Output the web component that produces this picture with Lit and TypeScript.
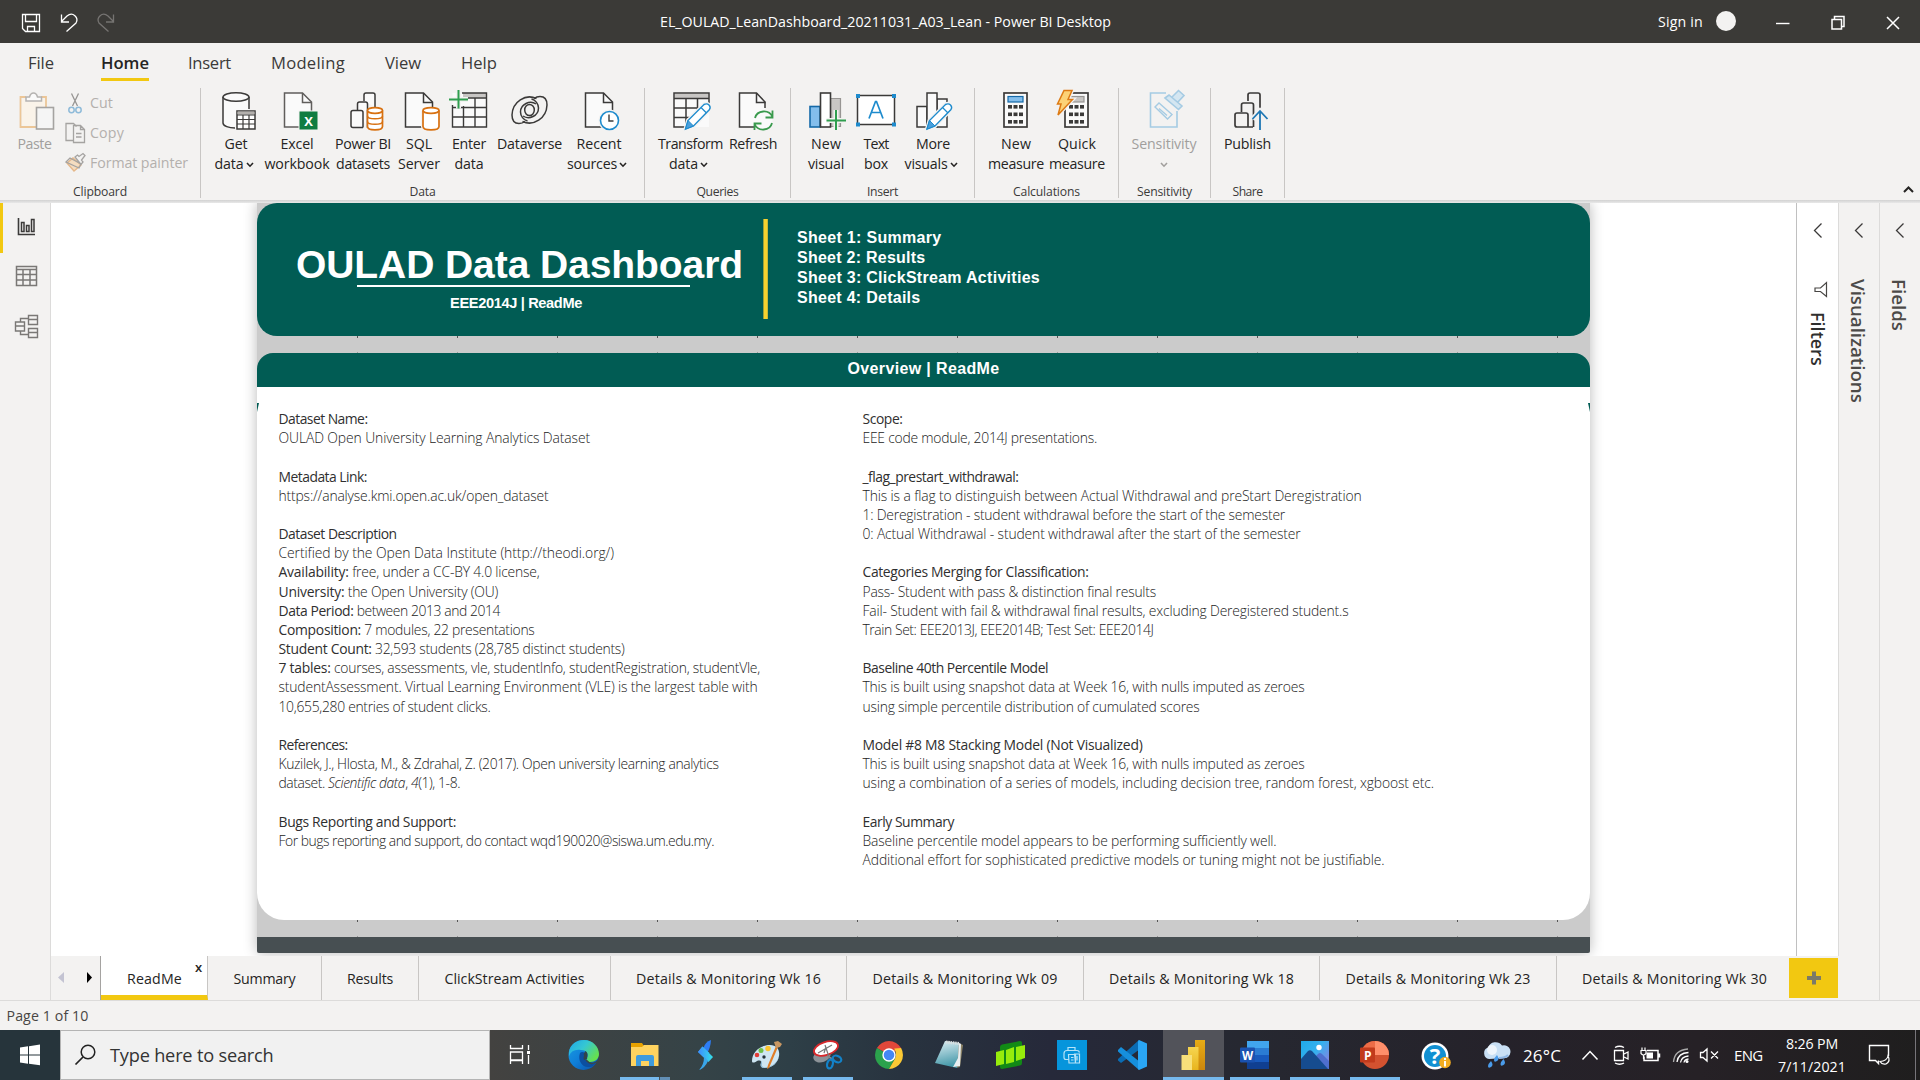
import { LitElement, html, svg, css } from "lit";
import { customElement, property } from "lit/decorators.js";
import { classMap } from "lit/directives/class-map.js";

/** Text whose tracking is adjusted so that it takes a given width. */
@customElement("fit-text")
class FitText extends LitElement {
  @property({ type: Number }) w = 0;
  static styles = css`
    :host { display: inline-block; white-space: nowrap; }
    .t { display: inline-block; white-space: nowrap; }
  `;
  firstUpdated() {
    const t = this.renderRoot.querySelector(".t") as HTMLElement;
    const n = (this.textContent || "").trim().length;
    if (!n || !this.w) return;
    const r = t.getBoundingClientRect();
    const diff = this.w - Math.max(r.width, this.hasAttribute("upright") ? 0 : r.width);
    t.style.letterSpacing = `${diff / n}px`;
  }
  render() {
    return html`<span class="t"><slot></slot></span>`;
  }
}

/** Icons are drawn in window coordinates; x, y, w, h is the box they occupy. */
const box = (x: number, y: number, w: number, h: number, body: unknown) =>
  html`<svg width=${w} height=${h} viewBox="${x} ${y} ${w} ${h}" fill="none">${body}</svg>`;

const G = "#3b3a39";
const doc = (x: number, s = G) => svg`
  <path d="M${x} 93h18l9 9v25h-27z" fill="#fafafa" stroke=${s} stroke-width="1.5"/>
  <path d="M${x + 18} 93v9.500h9" stroke=${s} stroke-width="1.5"/>`;

const pencil = (x: number) => svg`
  <path d="M${x} 129l2.500-8.500 16-16q3-1.500 5 .5t.5 4.500l-16 16.500z" fill="#fff" stroke="#f3f2f1" stroke-width="4"/>
  <path d="M${x} 129l2.500-8.500 16-16q3-1.500 5 .5t.5 4.500l-16 16.500z" fill="#fff" stroke="#1e8bcd" stroke-width="1.4"/>
  <path d="M${x} 129l2.500-8.500 5.500 5.500z" fill="#4a9fdc" stroke="#1e8bcd"/>
  <path d="M${x + 15.5} 107.500l5.500 5.500" stroke="#1e8bcd" stroke-width="1.2"/>`;

const calc = (x: number, top: string, topStroke: string) => svg`
  <rect x=${x} y="93" width="23" height="34" fill="#fafafa" stroke=${G} stroke-width="1.700"/>
  <rect x=${x + 4} y="96.500" width="15" height="5.500" fill=${top} stroke=${topStroke} stroke-width="1.200"/>
  ${[105, 112.5, 120].map((y) => [4, 9.5, 15].map((dx) => svg`<rect x=${x + dx} y=${y} width="4" height="3.600" fill=${G}/>`))}`;

const chev = (c = "#252423") => html`<svg class="chev" width="8" height="6" viewBox="0 0 8 6" fill="none"><path d="M1 1l3 3.200 3-3.200" stroke=${c} stroke-width="1.600"/></svg>`;

interface Btn { c: number; icon: unknown; lines: [string, number, boolean?][]; off?: boolean }
interface Group { name: string; w: number; cls: string; items: Btn[] }

const groups: Group[] = [
  {
    name: "Data", w: 26, cls: "data", items: [
      { c: 236, lines: [["Get", 23], ["data", 29, true]], icon: svg`
        <path d="M223 97v26c0 3 6 5 13 5v-18h13v-13z" fill="#fafafa"/>
        <path d="M223 97v26c0 3 6 5 12 5M249 97v12" stroke=${G} stroke-width="1.500"/>
        <ellipse cx="236" cy="97" rx="13" ry="4.300" fill="#fafafa" stroke=${G} stroke-width="1.500"/>
        <rect x="237" y="111" width="18" height="18" fill="#fff" stroke=${G} stroke-width="1.500"/>
        <rect x="237.500" y="111.500" width="17" height="3" fill="#b3b0ad"/>
        <path d="M237 115h18M237 119.500h18M237 124h18M243 115v14M249 115v14" stroke=${G} stroke-width="1.200"/>` },
      { c: 297, lines: [["Excel", 33], ["workbook", 65]], icon: svg`${doc(284.5, "#605e5c")}
        <rect x="299" y="111" width="19" height="19" fill="#107c41" stroke="#f3f2f1"/>
        <text x="308.500" y="125.500" text-anchor="middle" font-family="Open Sans" font-weight="700" font-size="13" fill="#fff">X</text>` },
      { c: 363, lines: [["Power BI", 56], ["datasets", 54]], icon: svg`
        <path d="M364 101v-6q0-2 2-2h7q2 0 2 2v12M357.500 110v-6q0-2 2-2h6q2 0 2 2v24M363 127.500h-10q-2 0-2-2v-13q0-2 2-2h8q2 0 2 2v15" fill="#fafafa" stroke=${G} stroke-width="1.500"/>
        <path d="M367.500 110.500v16c0 4.500 15 4.500 15 0v-16" fill="#fff" stroke="#d87111" stroke-width="1.700"/>
        <ellipse cx="375" cy="110.500" rx="7.500" ry="2.800" fill="#fff" stroke="#d87111" stroke-width="1.700"/>
        <path d="M367.500 116c0 3.800 15 3.800 15 0M367.500 121.500c0 3.800 15 3.800 15 0" stroke="#d87111" stroke-width="1.500"/>` },
      { c: 419, lines: [["SQL", 26], ["Server", 42]], icon: svg`${doc(405.5)}
        <path d="M423 110.500v16c0 4.500 16 4.500 16 0v-16" fill="#fff" stroke="#f3f2f1" stroke-width="4"/>
        <path d="M423 110.500v16c0 4.500 16 4.500 16 0v-16" fill="#fff" stroke="#d87111" stroke-width="1.700"/>
        <ellipse cx="431" cy="110.500" rx="8" ry="2.800" fill="#fff" stroke="#d87111" stroke-width="1.700"/>` },
      { c: 469, lines: [["Enter", 34], ["data", 29]], icon: svg`
        <rect x="452.500" y="93" width="34" height="34" fill="#fafafa"/>
        <path d="M463 93h23.500v4.500H463z" fill="#c8c6c4"/>
        <path d="M462 93h24.500v34h-34v-22M464 98h22.500M464 107.500h22M453 107.500h11M453 117h33M463.500 106v21M475 98v29" stroke=${G} stroke-width="1.400"/>
        <path d="M458.500 90v18.500M449 99.500h19" stroke="#f3f2f1" stroke-width="5"/>
        <path d="M458.500 90v18.500M449 99.500h19" stroke="#2f9e4f" stroke-width="2"/>` },
      { c: 529.5, lines: [["Dataverse", 65]], icon: svg`
        <g stroke=${G} stroke-width="1.500">
        <path d="M536 98.500c-11-5-24 3-24.500 16.500 0 6 3 8.500 7 8.500 2 0 4-.5 6-2"/>
        <path d="M522 121.500c11 5 24-3 24.500-16.500 0-6-3-8.500-7-8.500-2 0-4 .5-6 2"/>
        <path d="M535.500 104c-6-4-15.500 0-15.500 8 0 4 3 8 7 9"/>
        <path d="M522.500 116c6 4 15.500 0 15.500-8 0-4-3-8-7-9"/>
        <ellipse cx="529" cy="110" rx="4.800" ry="5.500"/></g>` },
      { c: 599, lines: [["Recent", 45], ["sources", 50, true]], icon: svg`${doc(585.5)}
        <circle cx="609.500" cy="120.500" r="9" fill="#fff" stroke="#f3f2f1" stroke-width="4"/>
        <circle cx="609.500" cy="120.500" r="9" fill="#fff" stroke="#1e8bcd" stroke-width="1.600"/>
        <path d="M609 114.500v6.500h4.500" stroke=${G} stroke-width="1.400"/>` },
    ],
  },
  {
    name: "Queries", w: 42, cls: "queries", items: [
      { c: 690.5, lines: [["Transform", 65], ["data", 29, true]], icon: svg`
        <rect x="673.500" y="93" width="35" height="34" fill="#fafafa"/>
        <rect x="674" y="93.500" width="34" height="4.500" fill="#c8c6c4"/>
        <path d="M685 127h-11.500v-34h35v14M674 98.500h34M674 108h30M674 117.500h18M685.500 98.500v28M697 98.500v14" stroke=${G} stroke-width="1.500"/>${pencil(685)}` },
      { c: 753, lines: [["Refresh", 48]], icon: svg`
        <path d="M755 127h-15.500v-34h17l8.500 9v7" fill="#fafafa"/><path d="M754 127h-14.500v-34h17l8.500 9v6" stroke=${G} stroke-width="1.500"/><path d="M756.500 93v9.500h9" stroke=${G} stroke-width="1.500"/>
        <circle cx="763.500" cy="120.500" r="9" fill="#fafafa"/>
        <path d="M755 118c2-8 14-9 17.500-1M772.500 110.500v7h-7M772 123c-2 8-14 9-17.500 1M754.500 130v-6.500h7" stroke="#3a9a4d" stroke-width="1.800"/>` },
    ],
  },
  {
    name: "Insert", w: 31, cls: "insert", items: [
      { c: 826, lines: [["New", 30], ["visual", 36]], icon: svg`
        <path d="M830.500 98.500h10v28h-10z" fill="#c8c6c4" stroke="#979593" stroke-width="1.200"/>
        <rect x="810" y="106.500" width="10" height="20.500" fill="#83beec" stroke="#1469a8" stroke-width="1.600"/>
        <rect x="820.500" y="93" width="10" height="34" fill="#fff" stroke=${G} stroke-width="1.600"/>
        <path d="M836 110v20M826.500 120.500h19.500" stroke="#f3f2f1" stroke-width="5"/>
        <path d="M836 110v20M826.500 120.500h19.500" stroke="#2f9e4f" stroke-width="2"/>` },
      { c: 876, lines: [["Text", 25], ["box", 24]], icon: svg`
        <rect x="857.500" y="95.500" width="37" height="29" fill="#fff" stroke=${G} stroke-width="1.500"/>
        <path d="M856 94h4v4h-4zM892 94h4v4h-4zM856 122.500h4v4h-4zM892 122.500h4v4h-4z" fill="#1e8bcd"/>
        <path d="M869 118.500l6.500-17h1l6.500 17M871.500 112.500h9.500" stroke="#1e8bcd" stroke-width="1.700"/>` },
      { c: 933, lines: [["More", 34], ["visuals", 43, true]], icon: svg`
        <path d="M937 99h10v28h-10z" fill="#fafafa" stroke=${G} stroke-width="1.500"/>
        <rect x="917" y="106.500" width="10" height="20.500" fill="#fafafa" stroke=${G} stroke-width="1.500"/>
        <rect x="927" y="93" width="10" height="34" fill="#fafafa" stroke=${G} stroke-width="1.500"/>${pencil(927)}` },
    ],
  },
  {
    name: "Calculations", w: 67, cls: "calcs", items: [
      { c: 1016, lines: [["New", 30], ["measure", 56]], icon: calc(1004, "#83beec", "#1469a8") },
      { c: 1077, lines: [["Quick", 38], ["measure", 56]], icon: svg`${calc(1065, "#c8c6c4", "#979593")}
        <path d="M1064 90.500h8l-4 9h4.500l-14.500 15.500 3-11h-3.500z" fill="#fcd277" stroke="#f3f2f1" stroke-width="4"/>
        <path d="M1064 90.500h8l-4 9h4.500l-14.500 15.500 3-11h-3.500z" fill="#fcd277" stroke="#dd7a14" stroke-width="1.500"/>` },
    ],
  },
  {
    name: "Sensitivity", w: 55, cls: "sens", items: [
      { c: 1164, off: true, lines: [["Sensitivity", 65], ["", 0, true]], icon: svg`
        <path d="M1166 93h-15.500v34h26.500v-16" stroke="#a5cbe3" stroke-width="1.600"/>
        <path d="M1155 107l4-4 13 11.500-4.500 4.500zM1159 108.500l8 7" stroke="#a5cbe3" stroke-width="1.400"/>
        <path d="M1165 98l4-3 13 11-3.500 3.500zM1172 97l6.500-6.500 5.500 5-6.500 7" fill="#d4e6f1" stroke="#a5cbe3" stroke-width="1.600"/>` },
    ],
  },
  {
    name: "Share", w: 30, cls: "share", items: [
      { c: 1247, lines: [["Publish", 47]], icon: svg`
        <path d="M1247 101v-6q0-2 2-2h8q2 0 2 2v18M1240.500 112v-7q0-2 2-2h8q2 0 2 2v22M1252 127h-16q-2 0-2-2v-10q0-2 2-2h9q2 0 2 2v12" stroke=${G} stroke-width="1.700"/>
        <path d="M1259 130v-18M1251.500 119l7.500-8 7.500 8" stroke="#f3f2f1" stroke-width="5"/>
        <path d="M1259 130v-18.500M1251.500 119l7.500-8 7.500 8" stroke="#1e77b4" stroke-width="1.800"/>` },
    ],
  },
];

type Line = [w: number, bold: string, light?: string, em?: string, tail?: string] | null;

const leftText: Line[] = [
  [89, "Dataset Name:"],
  [311.5, "", "OULAD Open University Learning Analytics Dataset"],
  null,
  [88.5, "Metadata Link:"],
  [270, "", "https://analyse.kmi.open.ac.uk/open_dataset"],
  null,
  [118, "Dataset Description"],
  [335.5, "", "Certified by the Open Data Institute (http://theodi.org/)"],
  [261, "Availability:", " free, under a CC-BY 4.0 license,"],
  [219.5, "University:", " the Open University (OU)"],
  [221.5, "Data Period:", " between 2013 and 2014"],
  [256, "Composition:", " 7 modules, 22 presentations"],
  [346, "Student Count:", " 32,593 students (28,785 distinct students)"],
  [481.5, "7 tables:", " courses, assessments, vle, studentInfo, studentRegistration, studentVle,"],
  [479, "", "studentAssessment. Virtual Learning Environment (VLE) is the largest table with"],
  [212, "", "10,655,280 entries of student clicks."],
  null,
  [69, "References:"],
  [440, "", "Kuzilek, J., Hlosta, M., & Zdrahal, Z. (2017). Open university learning analytics"],
  [181.5, "", "dataset. ", "Scientific data", ", "],
  null,
  [177.5, "Bugs Reporting and Support:"],
  [435.5, "", "For bugs reporting and support, do contact wqd190020@siswa.um.edu.my."],
];

const rightText: Line[] = [
  [40, "Scope:"],
  [234.5, "", "EEE code module, 2014J presentations."],
  null,
  [156, "_flag_prestart_withdrawal:"],
  [499, "", "This is a flag to distinguish between Actual Withdrawal and preStart Deregistration"],
  [422.5, "", "1: Deregistration - student withdrawal before the start of the semester"],
  [438, "", "0: Actual Withdrawal - student withdrawal after the start of the semester"],
  null,
  [226, "Categories Merging for Classification:"],
  [293.5, "", "Pass- Student with pass & distinction final results"],
  [486, "", "Fail- Student with fail & withdrawal final results, excluding Deregistered student.s"],
  [291, "", "Train Set: EEE2013J, EEE2014B; Test Set: EEE2014J"],
  null,
  [185.5, "Baseline 40th Percentile Model"],
  [442, "", "This is built using snapshot data at Week 16, with nulls imputed as zeroes"],
  [337, "", "using simple percentile distribution of cumulated scores"],
  null,
  [280, "Model #8 M8 Stacking Model (Not Visualized)"],
  [442, "", "This is built using snapshot data at Week 16, with nulls imputed as zeroes"],
  [571.5, "", "using a combination of a series of models, including decision tree, random forest, xgboost etc."],
  null,
  [91.5, "Early Summary"],
  [414, "", "Baseline percentile model appears to be performing sufficiently well."],
  [522, "", "Additional effort for sophisticated predictive models or tuning might not be justifiable."],
];

const pages: [string, number, string][] = [
  ["Summary", 62, "p1"], ["Results", 46, "p2"], ["ClickStream Activities", 140, "p3"],
  ["Details & Monitoring Wk 16", 185, "p4"], ["Details & Monitoring Wk 09", 185, "p5"],
  ["Details & Monitoring Wk 18", 185, "p4"], ["Details & Monitoring Wk 23", 185, "p5"],
  ["Details & Monitoring Wk 30", 185, "p6"],
];

interface App { run?: "full" | "mid" | "split"; active?: boolean; narrow?: boolean; icon: unknown }
const apps: App[] = [
  { icon: svg`<circle cx="15.500" cy="16" r="15" fill="url(#edgeB)"/>
      <path d="M1 13C2 5 9 1 16 1c9 0 15 7 15 14 0 5-4 8-9 8-3 0-4-2-3-4 2-3 0-8-6-8C7 10 3 12 1 17z" fill="url(#edgeT)"/>
      <path d="M12 14c-3 8 3 15 9 14 3 0 6-2 7-4-5 2-9 0-10-3-1-2 1-3 0-5-1-3-4-4-6-2z" fill="#0c4fa0"/>
      <path d="M16.500 13.500c3 2 0 4 1 7" stroke="#32444a" stroke-width="3.500"/>
      <path d="M18 21c4 5 9 4 13 0" stroke="#38454a" stroke-width="1.500"/>
      <defs><linearGradient id="edgeB" x1="0" y1="0" x2="1" y2="1"><stop offset="0" stop-color="#1b9de2"/><stop offset=".5" stop-color="#0f7ed8"/><stop offset="1" stop-color="#0b4da2"/></linearGradient>
      <linearGradient id="edgeT" x1="0" y1="0" x2="1" y2=".6"><stop offset="0" stop-color="#1fa7e8"/><stop offset=".5" stop-color="#35c7d3"/><stop offset="1" stop-color="#66e04e"/></linearGradient></defs>` },
  { run: "split", icon: svg`<path d="M2 4h11l2 3h14v20H2z" fill="#e8a200"/><path d="M2 8h11l2-2h14.500v21H2z" fill="#ffd35f"/><path d="M7 27V18q0-2 2-2h14q2 0 2 2v9h-5v-5h-8v5z" fill="#3f9bdd"/>` },
  { icon: svg`<path d="M21 1q-6 2-7.500 8l4 4.500q3-5 3.500-12.500z" fill="#2d7df5"/><path d="M12.500 7.500L8 13l6.500 6 5-5z" fill="#35a6f7"/><path d="M8 13l4.500-5.500L23 18l-4.500 5z" fill="url(#sh)"/><path d="M14 18q0 8-5 13 6-2 9-9z" fill="#3aa5e8"/>
      <defs><linearGradient id="sh"><stop offset="0" stop-color="#3d8bff"/><stop offset="1" stop-color="#35e0e8"/></linearGradient></defs>` },
  { run: "full", icon: svg`<path d="M1 22c0-9 8-16 18-16 7 0 10 5 9 11-1 7-7 12-14 12-4 0-5-2-4-5 1-2-1-3-4-2-3 2-5 2-5 0z" fill="#cfe6f3"/><path d="M3 23c5-3 9-1 8 2s2 4 5 3c6-1 10-5 12-10-2 6-7 11-14 11-4 0-5-2-4-5s-3-3-7-1z" fill="#8fbcd8"/><circle cx="6" cy="16" r="2.300" fill="#e23c36"/><circle cx="10" cy="11.500" r="2.500" fill="#6fc04a"/><circle cx="17" cy="9.500" r="2.700" fill="#fcc32c"/><circle cx="13" cy="18" r="1.700" fill="#26333b"/><path d="M25 7l2 1-9 21-2 1 1-4z" fill="#e07c26"/><path d="M23 3l4-1 4 3-2 3-4 1z" fill="#c99763"/>` },
  { run: "full", icon: svg`<ellipse cx="10" cy="17" rx="9" ry="6" fill="#8c9298" transform="rotate(-20 10 17)"/><ellipse cx="14" cy="9.500" rx="12.500" ry="6.500" fill="#fff" stroke="#d8292c" stroke-width="1.800" transform="rotate(-18 14 9.500)"/><path d="M6 14L20 6M13 6l4 12M14 8l-2 6" stroke="#777" stroke-width="1.200"/><path d="M15 17l7 4" stroke="#888" stroke-width="2"/><ellipse cx="18" cy="25" rx="2.800" ry="4.500" stroke="#1382c9" stroke-width="2.200" transform="rotate(15 18 25)"/><ellipse cx="25" cy="20" rx="4.500" ry="3" stroke="#1382c9" stroke-width="2.200" transform="rotate(25 25 20)"/>` },
  { icon: svg`<path d="M16 16L3.900 9A14 14 0 0 1 28.100 9z" fill="#e0473a"/><path d="M3.900 9A14 14 0 0 0 16 30l6-10.500L16 16z" fill="#2ba24c"/><path d="M28.100 9A14 14 0 0 1 16 30l6.100-10.500Q24 14 21 9z" fill="#fbc934"/><path d="M16 9h12.100L16 10z" fill="#e0473a"/><circle cx="16" cy="16" r="6.700" fill="#fff"/><circle cx="16" cy="16" r="5.300" fill="#4587f3"/>` },
  { icon: svg`<path d="M11 2l14 2 4 2-3 22-4 1z" fill="#8a8165"/><path d="M11 2l14 2-2 25L1 24z" fill="url(#np)"/><path d="M25 4l2 1-1 22-7 1 5-9z" fill="#e9eef0"/><path d="M12 3l13 1.500" stroke="#d9dfe1" stroke-width="3" stroke-dasharray="1.500 .8"/>
      <defs><linearGradient id="np" x1=".3" y1="0" x2=".5" y2="1"><stop offset="0" stop-color="#d6eaf0"/><stop offset="1" stop-color="#3e95a6"/></linearGradient></defs>` },
  { icon: svg`<path d="M5 8q0-2 2-2.500L25 2q2 0 2 2v20q0 2-2 2.500L7 30q-2 0-2-2z" fill="#128a16"/><path d="M1 13l8-2v14l-8 2zM11 11l8-3v15l-8 2zM21 8l9-2v13l-9 3z" fill="#97ec0c"/>` },
  { icon: svg`<rect x="1" y="1" width="30" height="30" fill="#0695dc"/><g stroke="#b5e3f8" stroke-width="1.200"><path d="M12 11.500V8.500h7v3M13 20.500h-3M10 20.500q-2 0-2-2v-4q0-3 3-3h10q2 0 2.500 2M12.500 15.500h7v8.500h-6.500zM15 18.500h2.500M15 21h2.500M18.500 15h5v9h-4zM21 17v4.500"/></g>` },
  { icon: svg`<path d="M22 1l1 9L4 24l-3-2.500v-1.500z" fill="#0a6cb4"/><path d="M1 11l3-3 19 15-1 8L1 12.500z" fill="#168fdc"/><path d="M22 1l8 3.500v23L22 31q-1-.5-1-2V3q0-1.500 1-2z" fill="#2aa6f5"/>` },
  { active: true, run: "full", icon: svg`<rect x="17" y="1" width="10" height="30" fill="url(#pb3)"/><rect x="10" y="8" width="10.500" height="23" fill="url(#pb2)"/><rect x="3.500" y="16" width="10.500" height="15" fill="#f8e07a"/>
      <defs><linearGradient id="pb3" x2="0" y2="1"><stop offset="0" stop-color="#e7ac15"/><stop offset="1" stop-color="#cb860c"/></linearGradient><linearGradient id="pb2" x2="0" y2="1"><stop offset="0" stop-color="#f6d550"/><stop offset="1" stop-color="#e8b41d"/></linearGradient></defs>` },
  { run: "mid", icon: svg`<path d="M8 2h22v7H8z" fill="#41a5ee"/><path d="M8 9h22v7H8z" fill="#2b7cd3"/><path d="M8 16h22v7H8z" fill="#185abd"/><path d="M8 23h22v7H8z" fill="#103f91"/><rect x="1" y="8.500" width="15" height="15" rx="1" fill="#1a52b0"/><text x="8.500" y="20.500" text-anchor="middle" font-family="Open Sans" font-weight="700" font-size="11.500" fill="#fff">W</text>` },
  { run: "mid", narrow: true, icon: svg`<rect x="2" y="2" width="28" height="28" fill="url(#ph)"/><circle cx="20" cy="8.500" r="2.700" fill="#fff"/><path d="M14 20l5-5q2-2 4 0l7 7v8H14z" fill="#4f6fce"/><path d="M2 20l7-8q2-1.500 4 0l16 18H2z" fill="#164c8f"/>
      <defs><linearGradient id="ph" x2="1" y2=".8"><stop offset="0" stop-color="#1fa9ea"/><stop offset=".5" stop-color="#36b1ee"/><stop offset="1" stop-color="#8a7fe0"/></linearGradient></defs>` },
  { run: "mid", narrow: true, icon: svg`<circle cx="16" cy="16" r="14" fill="#d35230"/><path d="M16 2a14 14 0 0 1 14 14H16z" fill="#ff8f6b"/><path d="M16 2a14 14 0 0 0-14 14h14z" fill="#ed6c47"/><rect x="1" y="8.500" width="15" height="15" rx="1" fill="#c23b1c"/><text x="8.700" y="20.500" text-anchor="middle" font-family="Open Sans" font-weight="700" font-size="12" fill="#fff">P</text>` },
  { icon: svg`<circle cx="15" cy="17" r="13.500" fill="#fff"/><circle cx="15" cy="17" r="11" fill="#1190d2"/><text x="15" y="25" text-anchor="middle" font-family="Open Sans" font-weight="700" font-size="22" fill="#fff">?</text><circle cx="25" cy="23.500" r="5.800" fill="#f2ac20"/><path d="M25 22v5.500M25 19v2" stroke="#fff" stroke-width="1.900"/>` },
];

@customElement("app-root")
class AppRoot extends LitElement {
  static styles = css`
    :host { display: flex; flex-direction: column; width: 1920px; height: 1080px; overflow: hidden; background: #f3f2f1; color: #252423; font-family: "Open Sans", "Noto Sans", sans-serif; font-size: 14px; }
    * { box-sizing: border-box; }
    svg { display: block; flex: none; overflow: visible; }
    .titlebar { height: 43px; flex: none; background: #3b3a37; color: #fff; display: flex; align-items: center; }
    .title { flex: none; width: 452px; margin-left: 528px; font-size: 14.2px; }
    .signin { width: 46px; margin-left: 546px; font-size: 14.2px; }
    .tabs { height: 45px; flex: none; display: flex; padding: 0 28px; font-size: 16.6px; color: #3b3a39; }
    .tab { height: 38px; padding-top: 7px; line-height: 25px; margin-right: 40px; border-bottom: 3px solid transparent; }
    .tab.file { margin-right: 47px; }
    .tab.home { color: #252423; font-weight: 600; border-color: #f2c811; margin-right: 39px; }
    .ribbon { height: 112px; flex: none; display: flex; }
    .group { height: 110px; border-right: 1px solid #c8c6c4; display: flex; flex-direction: column; }
    .buttons { height: 97px; display: grid; }
    .gname { height: 13px; line-height: 13px; text-align: center; font-size: 12.2px; color: #3b3a39; }
    .btn { display: flex; flex-direction: column; align-items: center; padding-top: 2px; font-size: 14.2px; line-height: 20px; }
    .btn svg.chev { margin: 2px 0 0 2px; }
    .btn .labels { padding-top: 4px; }
    .lbl { display: flex; justify-content: center; align-items: center; height: 20px; }
    .lbl.drop { margin-left: -4px; }
    .off .lbl.drop { margin-left: -3px; }
    .off { color: #a19f9d; }
    .clip { width: 201px; }
    .clip .buttons { grid-template-columns: 67px 1fr; }
    .clip .btn { padding-left: 2px; }
    .small { display: grid; grid-template-rows: repeat(3, 30px); color: #b3b0ad; font-size: 14.2px; }
    .small div { display: flex; align-items: center; }
    .small svg { margin-right: 1px; }
    .small fit-text { margin-top: -2px; }
    .data { width: 444px; } .data .buttons { grid-template-columns: 60px 62px 70px 42px 58px 63px 76px; padding-left: 5px; }
    .queries { width: 146px; } .queries .buttons { grid-template-columns: 67px 58px; padding-left: 12px; }
    .insert { width: 184px; } .insert .buttons { grid-template-columns: 50px 50px 64px; padding-left: 10px; }
    .calcs { width: 144px; } .calcs .buttons { grid-template-columns: 61px 61px; padding-left: 10.500px; }
    .sens { width: 92px; } .sens .buttons { grid-template-columns: 90px; }
    .share { width: 74px; } .share .buttons { grid-template-columns: 73px; }
    .collapse { margin: 97px 5px 0 auto; }
    .shadow { height: 3px; flex: none; background: linear-gradient(#d2d2d2, #e8e8e8); }
    .work { height: 797px; flex: none; display: flex; }
    .nav { width: 51px; border-right: 1px solid #dcdbda; }
    .nav div { height: 50px; display: flex; border-left: 3px solid transparent; }
    .nav div.on { border-color: #f2c811; }
    .mid { width: 1788px; display: flex; flex-direction: column; }
    .stage { height: 753px; display: flex; background: #fff; overflow: hidden; }
    .canvas { width: 1745px; padding-left: 206px; overflow: hidden; }
    .report { width: 1333px; height: 750px; background: #cbcbcb; box-shadow: 0 0 14px rgba(0,0,0,.28); border-radius: 0 0 2px 2px; }
    .hero { height: 133px; background: #015c54; border-radius: 20px; color: #fff; display: flex; font-family: "Liberation Sans", sans-serif; font-weight: 700; }
    .brand { width: 506px; padding: 40px 0 0 39px; }
    .brand h1 { margin: 0; font-size: 39px; line-height: 44px; height: 42px; }
    .rule { width: 333px; height: 2px; margin-left: 61px; background: #fff; }
    .sub { margin: 7px 0 0 154px; font-size: 14.600px; line-height: 18px; }
    .bar { width: 5px; height: 100px; margin-top: 16px; background: #f7d32e; border-left: 1px solid #9aa03e; border-right: 1px solid #c9b838; }
    .sheets { margin: 25px 0 0 29px; font-size: 16px; line-height: 20px; }
    .sheets div { height: 20px; }
    .gap { height: 17px; background: repeating-linear-gradient(90deg, #555 0 1px, transparent 1px 100px) 100px 0 / 1233px 2px no-repeat, repeating-linear-gradient(90deg, #999 0 1px, transparent 1px 100px) 100px 100% / 1233px 1px no-repeat; }
    .over { height: 34px; background: #015c54; border-radius: 16px 16px 0 0; color: #fff; text-align: center; font: 700 16px/31px "Liberation Sans", sans-serif; }
    .body { position: relative; height: 533px; background: #fff; border-radius: 0 0 27px 27px; display: grid; grid-template-columns: 584px 1fr; padding: 22px 0 0 21.500px; color: #222; font-size: 13.900px; }
    .notch { position: absolute; top: 16px; left: 0; width: 2px; height: 9px; background: #015c54; clip-path: polygon(0 0, 100% 0, 0 100%); }
    .notch.r { left: auto; right: 0; transform: scaleX(-1); }
    .line { height: 19.180px; line-height: 19.180px; display: flex; align-items: center; font-weight: 300; white-space: pre; }
    .line b { font-weight: 400; color: #2f2f2f; }
    .foot { height: 16px; background: #474f52; border-radius: 0 0 2px 2px; }
    .filters { width: 43px; border-left: 1px solid #c0c0c0; border-right: 1px solid #dcdbda; }
    .pane { width: 41px; border-right: 1px solid #dcdbda; }
    .pane:last-child { border-right: 0; width: 40px; }
    .pane, .filters { display: flex; flex-direction: column; align-items: center; color: #3b3a39; }
    .vert { writing-mode: vertical-rl; font-size: 18.700px; line-height: 24px; font-weight: 600; color: #4c4a48; margin-right: 3px; }
    .vert.b { color: #302f2e; font-size: 18px; margin: -1px 0 0; }
    .pages { height: 44px; display: flex; }
    .pages > div { display: flex; align-items: center; justify-content: center; border-right: 1px solid #c8c6c4; font-size: 14.200px; }
    .pages .arrows { width: 50px; border-color: #a5a3a1; }
    .pages .cur { width: 107px; background: #fff; border-bottom: 5px solid #f2c811; align-items: stretch; justify-content: flex-start; }
    .cur .nm { margin: 10px 0 0 26px; width: 68px; line-height: 26px; }
    .cur .x { font-size: 13px; line-height: 22px; font-weight: 600; }
    .p1 { width: 114px; } .p2 { width: 97px; } .p3 { width: 192px; } .p4 { width: 236px; } .p5 { width: 237px; }
    .pages .p6 { width: 232px; border: 0; padding-left: 3px; }
    .pages .add { width: 49px; height: 40px; margin-top: 2px; background: #f2c811; border: 0; }
    .status { height: 30px; flex: none; border-top: 1px solid #dcdbda; padding-left: 6.500px; display: flex; align-items: center; font-size: 14.200px; color: #484644; }
    .taskbar { height: 50px; flex: none; display: flex; color: #fff; background: linear-gradient(90deg, #26343b 0, #26343b 60px, #434240 490px, #354347 700px, #2e3f47 790px, #28333f 900px, #26293a 1050px, #262831 1240px, #25222a 1500px, #262126 1700px, #1f1e1e 1920px); }
    .start { width: 60px; }
    .search { width: 430px; background: #f1f1f1; border: 1px solid #b4b4b4; color: #333; display: flex; align-items: center; font-size: 18.200px; }
    .search svg { margin-right: -1px; }
    .app { width: 61px; height: 50px; display: flex; flex-direction: column; align-items: center; padding-top: 9px; justify-content: space-between; }
    .app.narrow { width: 60px; }
    .app.active { background: #52535a; }
    .line3 { height: 3px; width: 50px; background: #76b9ed; }
    .active .line3 { width: 61px; }
    .split { background: linear-gradient(90deg, #76b9ed 39px, #47525a 39px 40px, #628fb5 40px); }
    .tv { width: 63px; }
    .tray { display: flex; align-items: center; padding-left: 2px; }
    .tmp { width: 39px; padding-left: 1px; font-size: 17px; } .eng { width: 28px; font-size: 15px; }
    .clock { width: 100px; text-align: center; font-size: 14.200px; line-height: 23px; }
    .peek { width: 1px; height: 50px; background: #77757a; }
  `;

  private line(l: Line) {
    if (!l) return html`<div class="line"></div>`;
    const [w, b, t, em, tail] = l;
    return html`<div class="line"><fit-text w=${w}><b>${b}</b>${t ?? ""}${em ? html`<i>${em}</i>${tail}<i>4</i>(1), 1-8.` : ""}</fit-text></div>`;
  }

  private button(b: Btn) {
    return html`<div class=${classMap({ btn: true, off: !!b.off })}>
      ${box(b.c - 20, 90, 40, 40, b.icon)}
      <div class="labels">${b.lines.map(([t, w, c]) => html`<div class=${classMap({ lbl: true, drop: !!c })}>${t ? html`<fit-text w=${w}>${t}</fit-text>` : ""}${c ? chev(b.off ? "#a19f9d" : undefined) : ""}</div>`)}</div>
    </div>`;
  }

  private back = (x: number) => box(x - 20, 203, 40, 56, svg`<path d="M${x + 3.5} 223.500l-7 7 7 7" stroke="#3b3a39" stroke-width="1.300"/>`);

  render() {
    return html`
      <div class="titlebar">
        ${box(0, 0, 132, 43, svg`
          <g stroke="#fff" stroke-width="1.300"><path d="M22.500 14.500h17v17h-14l-3-3zM25.500 14.500v7h11v-7M27.500 31.500v-5h7v5"/>
          <path d="M61.500 14.500v7.500h7.500M61.500 21.500l5.500-5.500c6-5 12 2 9 7l-9.500 8.500"/></g>
          <path d="M113.500 14.500v7.500h-7.500M113.500 21.500l-5.500-5.500c-6-5-12 2-9 7l9.500 8.500" stroke="#767472" stroke-width="1.300"/>`)}
        <div class="title"><fit-text w="451">EL_OULAD_LeanDashboard_20211031_A03_Lean - Power BI Desktop</fit-text></div>
        <div class="signin"><fit-text w="45">Sign in</fit-text></div>
        ${box(1704, 0, 216, 43, svg`<circle cx="1726" cy="21" r="10" fill="#f3f2f1"/>
          <path d="M1776 23.500h13.500" stroke="#fff" stroke-width="1.400"/>
          <path d="M1832 19.500h9.500v9.500h-9.500zM1834.500 19v-2.500h9.500v10h-2.500" stroke="#fff" stroke-width="1.500"/>
          <path d="M1887 17l12 12M1899 17l-12 12" stroke="#fff" stroke-width="1.500"/>`)}
      </div>
      <div class="tabs">
        <div class="tab file"><fit-text w="26">File</fit-text></div>
        <div class="tab home"><fit-text w="48">Home</fit-text></div>
        <div class="tab"><fit-text w="43">Insert</fit-text></div>
        <div class="tab"><fit-text w="74">Modeling</fit-text></div>
        <div class="tab"><fit-text w="36">View</fit-text></div>
        <div class="tab"><fit-text w="36">Help</fit-text></div>
      </div>
      <div class="ribbon">
        <div class="group clip">
          <div class="buttons">
            <div class="btn off">
              ${box(16, 90, 40, 40, svg`<path d="M27 97h-5.500v30h17M42 97h5v10" stroke="#ecc697" stroke-width="1.800"/><path d="M23 99v26.500h14v-18h9v-8.500z" fill="#faf3e9"/>
              <path d="M27 101v-4h3.500q1-4 4-4t4 4h4v4z" fill="#fafafa" stroke="#b5b3b1" stroke-width="1.500"/><rect x="37.500" y="107.500" width="17" height="21.500" fill="#f5f5f5" stroke="#a5a3a1" stroke-width="1.600"/>`)}
              <div class="labels"><div class="lbl"><fit-text w="34">Paste</fit-text></div></div>
            </div>
            <div class="small">
              <div>${box(67, 88, 22, 30, svg`<path d="M71.500 93.500l6 12.500M78.500 93.500l-6 12.500" stroke="#979593" stroke-width="1.300"/><circle cx="71.500" cy="110" r="2.700" stroke="#8fbbd9" stroke-width="1.500"/><circle cx="78.500" cy="110" r="2.700" stroke="#8fbbd9" stroke-width="1.500"/>`)}<fit-text w="23">Cut</fit-text></div>
              <div>${box(67, 118, 22, 30, svg`<path d="M73 140.500h-7v-17h7.500l3 3" stroke="#a5a3a1" stroke-width="1.300"/><path d="M73.500 125.500h7l4 4v13h-11zM80.500 125.500v4h4M76 133.500h5.500M76 137h5.500" stroke="#a5a3a1" stroke-width="1.300"/>`)}<fit-text w="34">Copy</fit-text></div>
              <div>${box(67, 148, 22, 30, svg`<path d="M67 163l6-5 8 7-7 6z" fill="#f5ddc0" stroke="#e5b88a" stroke-width="1.400"/><path d="M66 162l4-4 11 6-2 4zM75 157l2.500-2 1.500 1.500 4-3 2 2-3.500 4.500 1.500 2-2 2.500z" stroke="#a5a3a1" stroke-width="1.300"/>`)}<fit-text w="98">Format painter</fit-text></div>
            </div>
          </div>
          <div class="gname"><fit-text w="54">Clipboard</fit-text></div>
        </div>
        ${groups.map((g) => html`<div class="group ${g.cls}">
          <div class="buttons">${g.items.map((b) => this.button(b))}</div>
          <div class="gname"><fit-text w=${g.w}>${g.name}</fit-text></div>
        </div>`)}
        <svg class="collapse" width="13" height="10" viewBox="0 0 13 10" fill="none"><path d="M2 7l4.500-4.500L11 7" stroke="#252423" stroke-width="2"/></svg>
      </div>
      <div class="shadow"></div>
      <div class="work">
        <div class="nav">
          <div class="on">${box(3, 203, 47, 50, svg`<path d="M18.500 218v16.500h16.500" stroke=${G} stroke-width="1.600"/><path d="M21.500 222.500h2.500v9h-2.500zM26.500 225.500h2.500v6h-2.500zM31.500 219.500h2.500v12h-2.500z" stroke=${G} stroke-width="1.500"/>`)}</div>
          <div>${box(3, 253, 47, 50, svg`<path d="M16.500 266.500h20v19h-20zM16.500 269.500h20M16.500 274.500h20M16.500 280h20M23 269.500v16M30 269.500v16" stroke="#7a7876" stroke-width="1.500"/>`)}</div>
          <div>${box(3, 303, 47, 50, svg`<path d="M28.500 315.500h9v9h-9zM28.500 319.500h9M15.500 322h9v9h-9zM15.500 326h9M28.500 328.500h9v9h-9zM28.500 332.500h9M28 318.500h-7.500v3M20.500 331.500v3h7.500" stroke="#7a7876" stroke-width="1.400"/>`)}</div>
        </div>
        <div class="mid">
          <div class="stage">
            <div class="canvas">
              <div class="report">
                <div class="hero">
                  <div class="brand">
                    <h1><fit-text w="447">OULAD Data Dashboard</fit-text></h1>
                    <div class="rule"></div>
                    <div class="sub"><fit-text w="132">EEE2014J | ReadMe</fit-text></div>
                  </div>
                  <div class="bar"></div>
                  <div class="sheets">
                    <div><fit-text w="144.500">Sheet 1: Summary</fit-text></div>
                    <div><fit-text w="128.500">Sheet 2: Results</fit-text></div>
                    <div><fit-text w="243">Sheet 3: ClickStream Activities</fit-text></div>
                    <div><fit-text w="123.500">Sheet 4: Details</fit-text></div>
                  </div>
                </div>
                <div class="gap"></div>
                <div class="over"><fit-text w="152">Overview | ReadMe</fit-text></div>
                <div class="body">
                  <div>${leftText.map((l) => this.line(l))}</div>
                  <div>${rightText.map((l) => this.line(l))}</div>
                  <span class="notch"></span><span class="notch r"></span>
                </div>
                <div class="gap"></div>
                <div class="foot"></div>
              </div>
            </div>
            <div class="filters">
              ${this.back(1818)}
              ${box(1798, 259, 40, 54, svg`<path d="M1826.500 282.500v14l-6-5h-5.500v-3.500h5.500z" stroke="#484644" stroke-width="1.200"/>`)}
              <div class="vert b">Filters</div>
            </div>
          </div>
          <div class="pages">
            <div class="arrows">${box(51, 956, 50, 44, svg`<path d="M64 972v11l-6-5.500z" fill="#c3c3d2"/><path d="M87 972v11l5-5.500z" fill="#000"/>`)}</div>
            <div class="cur"><div class="nm"><fit-text w="55">ReadMe</fit-text></div><div class="x">x</div></div>
            ${pages.map(([t, w, c]) => html`<div class=${c}><fit-text w=${w}>${t}</fit-text></div>`)}
            <div class="add">${box(1807, 971, 14, 14, svg`<path d="M1814 971.500v13M1807 978h14" stroke="#7b7a68" stroke-width="4"/>`)}</div>
          </div>
        </div>
        <div class="pane">${this.back(1859)}<svg width="1" height="20"></svg><div class="vert">Visualizations</div></div>
        <div class="pane">${this.back(1900)}<svg width="1" height="20"></svg><div class="vert">Fields</div></div>
      </div>
      <div class="status"><fit-text w="82">Page 1 of 10</fit-text></div>
      <div class="taskbar">
        <div class="start">${box(0, 1030, 60, 50, svg`<path d="M20 1047.500l8-1.200v8.200h-8zM29 1046.200l11-1.700v10h-11zM20 1055.500h8v8.200l-8-1.200zM29 1055.500h11v9.700l-11-1.500z" fill="#fff"/>`)}</div>
        <div class="search">${box(61, 1031, 50, 48, svg`<circle cx="88" cy="1052" r="6.800" stroke="#222" stroke-width="1.500"/><path d="M83 1057l-7.500 7.500" stroke="#222" stroke-width="1.700"/>`)}<fit-text w="163.500">Type here to search</fit-text></div>
        <div class="tv">${box(490, 1030, 63, 50, svg`<path d="M510.500 1045v3.500h12v-3.500M510.500 1052h12v8h-12zM510.500 1064v-3.500M522.500 1064v-3.500h-12M528.500 1045v5M528.500 1055v9" stroke="#fff" stroke-width="1.300"/><rect x="527" y="1051" width="3" height="3" fill="#fff"/>`)}</div>
        ${apps.map((a) => html`<div class=${classMap({ app: true, active: !!a.active, narrow: !!a.narrow })}>
          <svg width="32" height="32" viewBox="0 0 32 32" fill="none">${a.icon}</svg>
          ${a.run ? html`<div class=${classMap({ line3: true, split: a.run === "split" })}></div>` : ""}
        </div>`)}
        <div class="tray">
          ${box(1469, 1030, 54, 50, svg`<path d="M1490 1059a6 6 0 0 1-1-11.500 8 8 0 0 1 14-2 6 6 0 0 1 4 12.500z" fill="#c9e0f5"/><circle cx="1493" cy="1050" r="5" fill="#eef5fc"/><path d="M1500 1058q6 0 9-3" stroke="#8fb8e6" stroke-width="2"/>
            <path d="M1492 1061q3 4 0 6t-3-1q0-2 3-5zM1498 1055q3 4 0 6t-3-1q0-2 3-5zM1504.500 1059q3 4 0 6t-3-1q0-2 3-5z" fill="#4a9bea"/>`)}
          <div class="tmp"><fit-text w="38">26°C</fit-text></div>
          ${box(1561, 1030, 45, 50, svg`<path d="M1582.500 1059.500l7.500-8 7.500 8" stroke="#fff" stroke-width="1.500"/>`)}
          ${box(1606, 1030, 30, 50, svg`<path d="M1614.500 1050.500h9v10h-9zM1624 1054l4-2v7l-4-2M1615 1047.500q4.500-2.500 9 0M1615 1063q4.500 2.500 9 0" stroke="#fff" stroke-width="1.300"/>`)}
          ${box(1636, 1030, 30, 50, svg`<path d="M1647 1050.500h11v10h-14v-4M1659.500 1053.500v4" stroke="#fff" stroke-width="1.500"/><rect x="1646.500" y="1052.500" width="6.500" height="6" fill="#fff"/><path d="M1641 1050.500h5v3q-2.500 3-5 0zM1642 1050v-2.500M1645 1050v-2.500M1643.500 1055v4" stroke="#fff" stroke-width="1.200"/>`)}
          ${box(1666, 1030, 28, 50, svg`<path d="M1673.500 1062q1-12 14.500-13" stroke="#aaa" stroke-width="1.300"/><path d="M1677 1062q1-9 11.500-9.500M1680.500 1062.500q1-6 8-6.500M1684 1062.500q.5-3 4.500-3.500" stroke="#fff" stroke-width="1.300"/><circle cx="1687" cy="1061.500" r="1.500" fill="#fff"/>`)}
          ${box(1694, 1030, 40, 50, svg`<path d="M1700.500 1052.500h2.500l4-3.500v12l-4-3.500h-2.500zM1711 1051.500l7 7M1718 1051.500l-7 7" stroke="#fff" stroke-width="1.300"/>`)}
          <div class="eng"><fit-text w="28.500">ENG</fit-text></div>
          <div class="clock"><fit-text w="52">8:26 PM</fit-text><br><fit-text w="68">7/11/2021</fit-text></div>
          ${box(1862, 1030, 53, 50, svg`<path d="M1888.500 1056v-10.500h-19v15h6l3 3v-3" stroke="#fff" stroke-width="1.400"/><path d="M1888 1056q-1 5-8 5.500 2 3.500 6 2.500 5-3 2-8z" stroke="#fff" stroke-width="1.200"/>`)}
          <div class="peek"></div>
        </div>
      </div>`;
  }
}
